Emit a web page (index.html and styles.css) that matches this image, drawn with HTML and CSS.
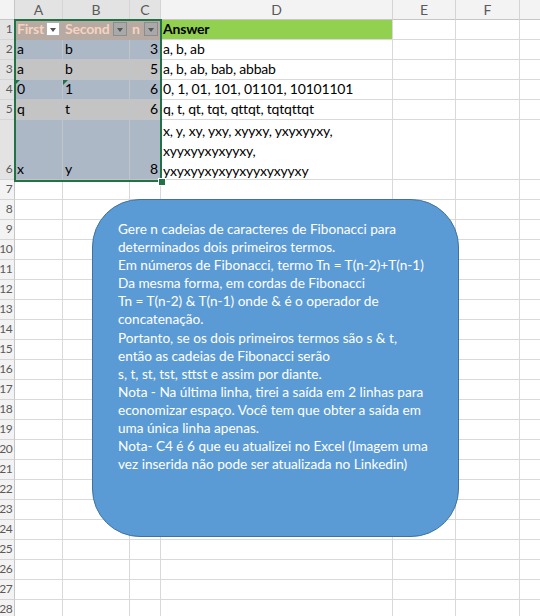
FILE: index.html
```html
<!DOCTYPE html>
<html lang="pt">
<head>
<meta charset="utf-8">
<title>Fibonacci strings</title>
<link rel="stylesheet" href="styles.css">
</head>
<body>
<div class="sheet">
  <div class="grid">
    <div class="corner"></div>
    <div class="ch sel">A</div>
    <div class="ch sel">B</div>
    <div class="ch sel">C</div>
    <div class="ch">D</div>
    <div class="ch">E</div>
    <div class="ch">F</div>
    <div class="ch"></div>

    <div class="rh sel">1</div>
    <div class="c th">First<span class="dd white"></span></div>
    <div class="c th">Second<span class="dd"></span></div>
    <div class="c th">n<span class="dd"></span></div>
    <div class="c answer">Answer</div>
    <div class="c"></div><div class="c"></div><div class="c"></div>

    <div class="rh sel">2</div>
    <div class="c ta">a</div>
    <div class="c ta">b</div>
    <div class="c ta num">3</div>
    <div class="c">a, b, ab</div>
    <div class="c"></div><div class="c"></div><div class="c"></div>

    <div class="rh sel">3</div>
    <div class="c tb">a</div>
    <div class="c tb">b</div>
    <div class="c tb num">5</div>
    <div class="c">a, b, ab, bab, abbab</div>
    <div class="c"></div><div class="c"></div><div class="c"></div>

    <div class="rh sel">4</div>
    <div class="c ta flag">0</div>
    <div class="c ta flag">1</div>
    <div class="c ta num">6</div>
    <div class="c">0, 1, 01, 101, 01101, 10101101</div>
    <div class="c"></div><div class="c"></div><div class="c"></div>

    <div class="rh sel">5</div>
    <div class="c tb">q</div>
    <div class="c tb">t</div>
    <div class="c tb num">6</div>
    <div class="c">q, t, qt, tqt, qttqt, tqtqttqt</div>
    <div class="c"></div><div class="c"></div><div class="c"></div>

    <div class="rh sel">6</div>
    <div class="c ta">x</div>
    <div class="c ta">y</div>
    <div class="c ta num">8</div>
    <div class="c wrap">x, y, xy, yxy, xyyxy, yxyxyyxy,<br>xyyxyyxyxyyxy,<br>yxyxyyxyxyyxyyxyxyyxy</div>
    <div class="c"></div><div class="c"></div><div class="c"></div>

    <div class="rh">7</div><div class="c"></div><div class="c"></div><div class="c"></div><div class="c"></div><div class="c"></div><div class="c"></div><div class="c"></div>
    <div class="rh">8</div><div class="c"></div><div class="c"></div><div class="c"></div><div class="c"></div><div class="c"></div><div class="c"></div><div class="c"></div>
    <div class="rh">9</div><div class="c"></div><div class="c"></div><div class="c"></div><div class="c"></div><div class="c"></div><div class="c"></div><div class="c"></div>
    <div class="rh">10</div><div class="c"></div><div class="c"></div><div class="c"></div><div class="c"></div><div class="c"></div><div class="c"></div><div class="c"></div>
    <div class="rh">11</div><div class="c"></div><div class="c"></div><div class="c"></div><div class="c"></div><div class="c"></div><div class="c"></div><div class="c"></div>
    <div class="rh">12</div><div class="c"></div><div class="c"></div><div class="c"></div><div class="c"></div><div class="c"></div><div class="c"></div><div class="c"></div>
    <div class="rh">13</div><div class="c"></div><div class="c"></div><div class="c"></div><div class="c"></div><div class="c"></div><div class="c"></div><div class="c"></div>
    <div class="rh">14</div><div class="c"></div><div class="c"></div><div class="c"></div><div class="c"></div><div class="c"></div><div class="c"></div><div class="c"></div>
    <div class="rh">15</div><div class="c"></div><div class="c"></div><div class="c"></div><div class="c"></div><div class="c"></div><div class="c"></div><div class="c"></div>
    <div class="rh">16</div><div class="c"></div><div class="c"></div><div class="c"></div><div class="c"></div><div class="c"></div><div class="c"></div><div class="c"></div>
    <div class="rh">17</div><div class="c"></div><div class="c"></div><div class="c"></div><div class="c"></div><div class="c"></div><div class="c"></div><div class="c"></div>
    <div class="rh">18</div><div class="c"></div><div class="c"></div><div class="c"></div><div class="c"></div><div class="c"></div><div class="c"></div><div class="c"></div>
    <div class="rh">19</div><div class="c"></div><div class="c"></div><div class="c"></div><div class="c"></div><div class="c"></div><div class="c"></div><div class="c"></div>
    <div class="rh">20</div><div class="c"></div><div class="c"></div><div class="c"></div><div class="c"></div><div class="c"></div><div class="c"></div><div class="c"></div>
    <div class="rh">21</div><div class="c"></div><div class="c"></div><div class="c"></div><div class="c"></div><div class="c"></div><div class="c"></div><div class="c"></div>
    <div class="rh">22</div><div class="c"></div><div class="c"></div><div class="c"></div><div class="c"></div><div class="c"></div><div class="c"></div><div class="c"></div>
    <div class="rh">23</div><div class="c"></div><div class="c"></div><div class="c"></div><div class="c"></div><div class="c"></div><div class="c"></div><div class="c"></div>
    <div class="rh">24</div><div class="c"></div><div class="c"></div><div class="c"></div><div class="c"></div><div class="c"></div><div class="c"></div><div class="c"></div>
    <div class="rh">25</div><div class="c"></div><div class="c"></div><div class="c"></div><div class="c"></div><div class="c"></div><div class="c"></div><div class="c"></div>
    <div class="rh">26</div><div class="c"></div><div class="c"></div><div class="c"></div><div class="c"></div><div class="c"></div><div class="c"></div><div class="c"></div>
    <div class="rh">27</div><div class="c"></div><div class="c"></div><div class="c"></div><div class="c"></div><div class="c"></div><div class="c"></div><div class="c"></div>
    <div class="rh">28</div><div class="c"></div><div class="c"></div><div class="c"></div><div class="c"></div><div class="c"></div><div class="c"></div><div class="c"></div>
  </div>

  <div class="selection"></div>
  <div class="handle"></div>

  <div class="shape">
    <p class="note">Gere n cadeias de caracteres de Fibonacci para<br>
determinados dois primeiros termos.<br>
Em números de Fibonacci, termo Tn = T(n-2)+T(n-1)<br>
Da mesma forma, em cordas de Fibonacci<br>
Tn = T(n-2) &amp; T(n-1) onde &amp; é o operador de<br>
concatenação.<br>
Portanto, se os dois primeiros termos são s &amp; t,<br>
então as cadeias de Fibonacci serão<br>
s, t, st, tst, sttst e assim por diante.<br>
Nota - Na última linha, tirei a saída em 2 linhas para<br>
economizar espaço. Você tem que obter a saída em<br>
uma única linha apenas.<br>
Nota- C4 é 6 que eu atualizei no Excel (Imagem uma<br>
vez inserida não pode ser atualizada no Linkedin)</p>
  </div>
</div>
</body>
</html>
```

FILE: styles.css
```css
html, body {
  margin: 0;
  padding: 0;
  background: #ffffff;
  overflow: hidden;
}

.sheet {
  position: relative;
  width: 540px;
  height: 616px;
  overflow: hidden;
  font-family: "Lato", "Liberation Sans", sans-serif;
  font-size: 14px;
  letter-spacing: -0.2px;
  color: #000;
}

.grid {
  display: grid;
  grid-template-columns: 15px 48px 67px 31px 232px 63px 64px 60px;
  grid-template-rows: 20px 20px 20px 20px 20px 20px 60px repeat(22, 20px);
}

.corner {
  background: #f3f3f3;
  border-right: 1px solid #c6c6c6;
  border-bottom: 1px solid #c6c6c6;
  box-sizing: border-box;
}

.ch {
  background: #f3f3f3;
  border-right: 1px solid #d5d5d5;
  border-bottom: 1px solid #c6c6c6;
  box-sizing: border-box;
  color: #5a5a5a;
  font-size: 14px;
  letter-spacing: 0;
  display: flex;
  align-items: center;
  justify-content: center;
}

.ch.sel {
  background: #e3e3e3;
}

.rh {
  background: #f3f3f3;
  border-right: 1px solid #c6c6c6;
  border-bottom: 1px solid #d5d5d5;
  box-sizing: border-box;
  color: #5a5a5a;
  font-size: 12px;
  letter-spacing: -0.6px;
  line-height: 18px;
  display: flex;
  align-items: flex-end;
  justify-content: flex-end;
  padding: 0 2px 1px 0;
  white-space: nowrap;
}

.rh.sel {
  background: #e3e3e3;
}

.c {
  position: relative;
  border-right: 1px solid #d9d9d9;
  border-bottom: 1px solid #d9d9d9;
  box-sizing: border-box;
  display: flex;
  align-items: flex-end;
  padding: 0 2px 1px 2px;
  white-space: nowrap;
  line-height: 18px;
}

.num {
  justify-content: flex-end;
}

.th {
  background: #b6aaa2;
  color: #f8d2bf;
  font-weight: bold;
  border-color: #b6aaa2;
  overflow: hidden;
}

.ta {
  background: #adb8c7;
  border-color: #c0c4cb;
}

.tb {
  background: #c4c4c4;
  border-color: #c0c4cb;
}

.answer {
  background: #92d050;
  font-weight: bold;
}

.wrap {
  display: block;
  white-space: nowrap;
  line-height: 20px;
  padding-top: 1px;
}

.dd {
  position: absolute;
  right: 2px;
  top: 2px;
  width: 14px;
  height: 14px;
  box-sizing: border-box;
  background: #a9a9a9;
  border: 1px solid #8c8c8c;
}

.dd::after {
  content: "";
  position: absolute;
  left: 3px;
  top: 5px;
  border-left: 3.5px solid transparent;
  border-right: 3.5px solid transparent;
  border-top: 4px solid #555;
}

.dd.white {
  background: #ffffff;
  border-color: #b0b0b0;
}

.flag::before {
  content: "";
  position: absolute;
  left: 0;
  top: 0;
  border-top: 5px solid #1e7145;
  border-right: 5px solid transparent;
}

.selection {
  position: absolute;
  left: 14px;
  top: 19px;
  width: 148px;
  height: 163px;
  box-sizing: border-box;
  border: 2px solid #217346;
  pointer-events: none;
}

.handle {
  position: absolute;
  left: 158px;
  top: 178px;
  width: 6px;
  height: 6px;
  background: #217346;
  border: 1px solid #ffffff;
}

.shape {
  position: absolute;
  left: 92px;
  top: 199px;
  width: 367px;
  height: 338px;
  box-sizing: border-box;
  background: #5b9bd5;
  border: 1px solid #41719c;
  border-radius: 48px;
  padding: 20px 0 0 25px;
}

.note {
  margin: 0;
  color: #ffffff;
  font-size: 13.6px;
  letter-spacing: 0;
  line-height: 18.1px;
  white-space: nowrap;
}
```
